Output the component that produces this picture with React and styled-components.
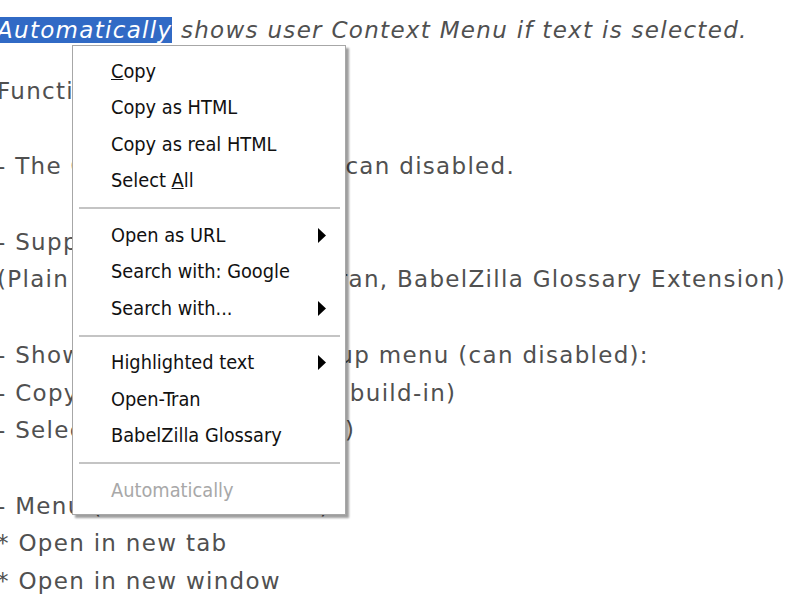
import React from "react";
import styled, { createGlobalStyle } from "styled-components";

const Global = createGlobalStyle`
  html, body { margin: 0; padding: 0; background: #fff; }
  body { width: 800px; height: 600px; overflow: hidden; }
`;

const Page = styled.div`
  position: relative;
  width: 800px;
  height: 600px;
  overflow: hidden;
  background: #fff;
`;

const Doc = styled.div`
  margin-left: -3px;
  padding-top: 11px;
  font-family: "DejaVu Sans", sans-serif;
  font-size: 23px;
  letter-spacing: 1.3px;
  color: #505050;
  white-space: pre;
`;

const Title = styled.div`
  line-height: 38px;
  font-style: italic;
  margin-bottom: 24px;
`;

const Sel = styled.span`
  background: #316ac5;
  color: #fff;
`;

const Line = styled.div`
  line-height: 37.7px;
  height: 37.7px;
`;

const Menu = styled.div`
  position: absolute;
  left: 72px;
  top: 45px;
  width: 272px;
  padding: 7px 0 5px;
  background: #fff;
  border: 1px solid #a7a7a7;
  box-shadow: 3px 3px 2px rgba(0, 0, 0, 0.38);
  font-family: "DejaVu Sans Condensed", "DejaVu Sans", sans-serif;
  font-stretch: condensed;
  font-size: 19.8px;
  color: #111;
`;

const Item = styled.div`
  display: flex;
  align-items: center;
  justify-content: space-between;
  height: 36.5px;
  padding: 0 18px 0 38px;
  color: ${(p) => (p.$disabled ? "#a8a8a8" : "#111")};
`;

const Sep = styled.div`
  height: 18px;
  display: flex;
  align-items: center;
  padding: 0 5px 0 6px;
  &::before {
    content: "";
    flex: 1;
    height: 2px;
    background: #c4c4c4;
  }
`;

const Arrow = () => (
  <svg width="9" height="15" viewBox="0 0 9 15">
    <polygon points="0,0 8,7.5 0,15" fill="#000" />
  </svg>
);

const items = [
  { label: <><u>C</u>opy</> },
  { label: "Copy as HTML" },
  { label: "Copy as real HTML" },
  { label: <>Select <u>A</u>ll</> },
  { sep: true },
  { label: "Open as URL", sub: true },
  { label: "Search with: Google" },
  { label: "Search with...", sub: true },
  { sep: true },
  { label: "Highlighted text", sub: true },
  { label: "Open-Tran" },
  { label: "BabelZilla Glossary" },
  { sep: true },
  { label: "Automatically", disabled: true },
];

const lines = [
  "Functions:",
  "",
  "- The Context-Menu option can disabled.",
  "",
  "- Support:",
  "(Plain text, Google, Open-Tran, BabelZilla Glossary Extension)",
  "",
  "- Shows in the context popup menu (can disabled):",
  "- Copy, Select-All (Firefox's build-in)",
  "- Selected texts (for search)",
  "",
  "- Menu (Plain Text to Link)",
  "* Open in new tab",
  "* Open in new window",
];

export default function App() {
  return (
    <Page>
      <Global />
      <Doc>
        <Title>
          <Sel>Automatically</Sel> shows user Context Menu if text is selected.
        </Title>
        {lines.map((l, i) => (
          <Line key={i}>{l}</Line>
        ))}
      </Doc>
      <Menu>
        {items.map((it, i) =>
          it.sep ? (
            <Sep key={i} />
          ) : (
            <Item key={i} $disabled={it.disabled}>
              <span>{it.label}</span>
              {it.sub && <Arrow />}
            </Item>
          )
        )}
      </Menu>
    </Page>
  );
}
